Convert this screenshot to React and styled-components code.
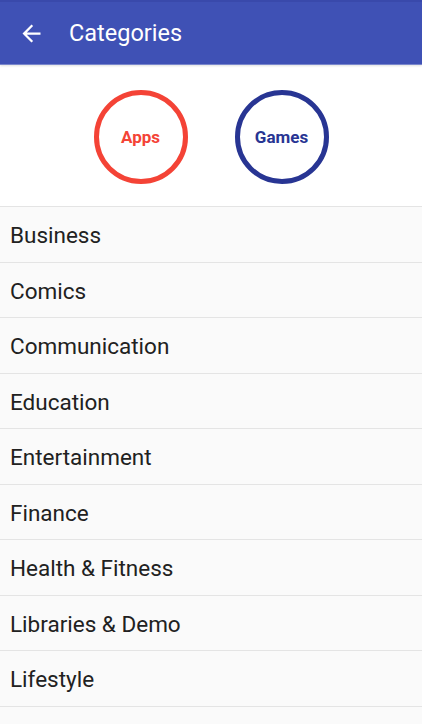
import React from 'react';
import styled, { createGlobalStyle } from 'styled-components';

const GlobalStyle = createGlobalStyle`
  html, body {
    margin: 0;
    padding: 0;
    background: #fafafa;
    font-family: Roboto, "Liberation Sans", sans-serif;
  }
`;

const Page = styled.div`
  width: 422px;
  height: 724px;
  overflow: hidden;
  background: #fafafa;
`;

const Toolbar = styled.header`
  height: 64px;
  background: #3f51b5;
  border-top: 2px solid #3949ab;
  box-sizing: border-box;
  display: flex;
  align-items: center;
  padding-left: 18px;
  box-shadow: 0 1px 0 #7986cb, 0 2px 2px rgba(0, 0, 0, 0.12);
  position: relative;
  z-index: 1;
`;

const BackButton = styled.button`
  border: none;
  background: none;
  padding: 0;
  width: 27px;
  height: 27px;
  display: flex;
  margin-top: 1px;
`;

const Title = styled.h1`
  margin: 0 0 0 24px;
  color: #fff;
  font-size: 23.5px;
  font-weight: 400;
`;

const TypeRow = styled.div`
  background: #fff;
  height: 142px;
  display: flex;
  justify-content: center;
  align-items: center;
  gap: 47px;
  padding-top: 4px;
  box-sizing: border-box;
`;

const TypeCircle = styled.div`
  width: 94px;
  height: 94px;
  box-sizing: border-box;
  border-radius: 50%;
  border: 5px solid ${p => p.color};
  color: ${p => p.color};
  display: flex;
  align-items: center;
  justify-content: center;
  font-size: 17px;
  font-weight: 700;
`;

const List = styled.ul`
  list-style: none;
  margin: 0;
  padding: 0;
  background: #fafafa;
`;

const Row = styled.li`
  height: 55.5px;
  box-sizing: border-box;
  border-top: 1px solid #e4e4e4;
  display: flex;
  align-items: center;
  padding-left: 10px;
  padding-top: 2px;
  font-size: 22.5px;
  color: #212121;
`;

const categories = [
  'Business',
  'Comics',
  'Communication',
  'Education',
  'Entertainment',
  'Finance',
  'Health & Fitness',
  'Libraries & Demo',
  'Lifestyle',
  '',
];

export default function App() {
  return (
    <Page>
      <GlobalStyle />
      <Toolbar>
        <BackButton aria-label="Back">
          <svg width="27" height="27" viewBox="0 0 24 24" fill="#fff">
            <path d="M20 11H7.83l5.59-5.59L12 4l-8 8 8 8 1.41-1.41L7.83 13H20v-2z" />
          </svg>
        </BackButton>
        <Title>Categories</Title>
      </Toolbar>
      <TypeRow>
        <TypeCircle color="#f44336">Apps</TypeCircle>
        <TypeCircle color="#283593">Games</TypeCircle>
      </TypeRow>
      <List>
        {categories.map((c, i) => (
          <Row key={i}>{c}</Row>
        ))}
      </List>
    </Page>
  );
}
